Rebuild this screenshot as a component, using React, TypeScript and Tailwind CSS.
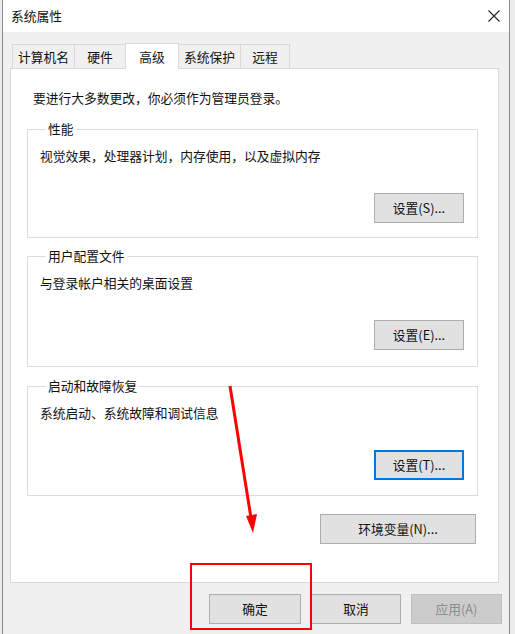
import React from 'react';

const font = { fontFamily: '"Noto Sans CJK SC", "Noto Sans", sans-serif' };

function WinButton({
  label,
  width,
  focused = false,
  disabled = false,
}: {
  label: string;
  width: string;
  focused?: boolean;
  disabled?: boolean;
}) {
  let cls = 'bg-[#e1e1e1] border border-[#adadad] text-[#111]';
  if (focused) cls = 'bg-[#e1e1e1] border-2 border-[#0078d7] text-[#111]';
  if (disabled) cls = 'bg-[#cccccc] border border-[#bfbfbf] text-[#8c8c8c]';
  return (
    <button className={`${width} h-[30px] flex items-center justify-center text-[12.75px] leading-none ${cls}`}>
      {label}
    </button>
  );
}

function GroupBox({
  title,
  text,
  button,
  focused = false,
  className = '',
}: {
  title: string;
  text: string;
  button: string;
  focused?: boolean;
  className?: string;
}) {
  return (
    <fieldset className={`ml-[16px] w-[451px] border border-[#dcdcdc] pl-[12px] pr-[13px] pt-[11px] ${className}`}>
      <legend className="ml-[6px] px-[2px] text-[12.75px] leading-[16px] text-[#111]">{title}</legend>
      <div className="text-[12.75px] leading-[16px] text-[#111]">{text}</div>
      <div className="mt-[29px] flex justify-end">
        <WinButton label={button} width="w-[90px]" focused={focused} />
      </div>
    </fieldset>
  );
}

const tabs = [
  { name: '计算机名', w: 'w-[63px]' },
  { name: '硬件', w: 'w-[52px]' },
  { name: '高级', w: 'w-[54px]', active: true },
  { name: '系统保护', w: 'w-[63px]' },
  { name: '远程', w: 'w-[50px]' },
];

export default function App() {
  return (
    <div className="relative w-[515px] h-[634px] overflow-hidden bg-[#ececec]" style={font}>
      <div className="ml-[2px] w-[508px] h-full border-x border-[#8a8a8a] bg-[#f0f0f0]">
        {/* title bar */}
        <div className="h-[32px] bg-white flex items-center justify-between pl-[8px] pr-[9px]">
          <span className="text-[12.75px] text-[#111]">系统属性</span>
          <svg width="12" height="12" viewBox="0 0 12 12">
            <path d="M0.5 0.5 L11.5 11.5 M11.5 0.5 L0.5 11.5" stroke="#222" strokeWidth="1.1" />
          </svg>
        </div>

        {/* tabs */}
        <div className="mt-[11px] ml-[9px] flex items-end h-[25px]">
          {tabs.map((t, i) => (
            <div
              key={t.name}
              className={
                t.active
                  ? `${t.w} -ml-px h-[26px] -mb-px relative z-10 bg-white border-x border-t border-[#d9d9d9] flex items-start justify-center pt-[3px] text-[12.75px] text-[#111]`
                  : `${t.w} ${i === 0 ? '' : '-ml-px'} h-[24px] bg-[#f0f0f0] border-x border-t border-[#d9d9d9] flex items-center justify-center text-[12.75px] text-[#111]`
              }
            >
              {t.name}
            </div>
          ))}
        </div>

        {/* tab panel */}
        <div className="ml-[7px] w-[489px] h-[515px] bg-white border border-[#d9d9d9] pt-[21px]">
          <div className="pl-[22px] text-[12.75px] leading-[16px] text-[#111]">
            要进行大多数更改，你必须作为管理员登录。
          </div>
          <GroupBox className="mt-[15px] pb-[14px]" title="性能" text="视觉效果，处理器计划，内存使用，以及虚拟内存" button="设置(S)..." />
          <GroupBox className="mt-[10px] pb-[16px]" title="用户配置文件" text="与登录帐户相关的桌面设置" button="设置(E)..." />
          <GroupBox className="mt-[11px] pb-[15px]" title="启动和故障恢复" text="系统启动、系统故障和调试信息" button="设置(T)..." focused />
          <div className="mt-[18px] pr-[22px] flex justify-end">
            <WinButton label="环境变量(N)..." width="w-[156px]" />
          </div>
        </div>

        {/* dialog buttons */}
        <div className="mt-[11px] pr-[7px] flex justify-end gap-[10px]">
          <WinButton label="确定" width="w-[92px]" />
          <WinButton label="取消" width="w-[90px]" />
          <WinButton label="应用(A)" width="w-[91px]" disabled />
        </div>
      </div>

      {/* red annotations */}
      <svg className="absolute left-0 top-0 pointer-events-none" width="515" height="634">
        <line x1="230" y1="386" x2="251" y2="518" stroke="#ff0000" strokeWidth="3" />
        <polygon points="253,533 246,516 257,514" fill="#ff0000" />
      </svg>
      <div className="absolute left-[190px] top-[563px] w-[122px] h-[67px] border-2 border-[#ff0000]" />
    </div>
  );
}
